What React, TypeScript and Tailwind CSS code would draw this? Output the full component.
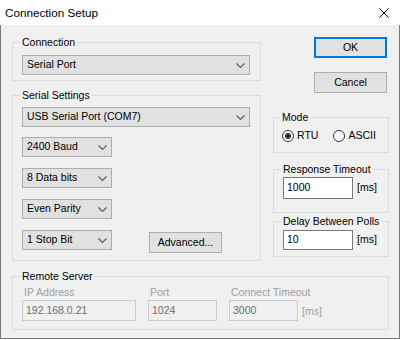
import type { ReactNode } from 'react';

function Chevron() {
  return (
    <svg width="9" height="5" viewBox="0 0 9 5" className="shrink-0">
      <path d="M0.5 0.5L4.5 4.5L8.5 0.5" fill="none" stroke="#5a5a5a" strokeWidth="1.1" />
    </svg>
  );
}

function Combo({ label, w }: { label: string; w: string }) {
  return (
    <div className={`${w} h-[20px] flex items-center justify-between pl-[4px] pr-[4px] bg-[#e1e1e1] border border-[#adadad]`}>
      <span>{label}</span>
      <Chevron />
    </div>
  );
}

function Group({ title, className, children }: { title: string; className: string; children: ReactNode }) {
  return (
    <fieldset className={`border border-[#dcdcdc] ${className}`}>
      <legend className="px-[2px] -ml-[2px] leading-[12px]">{title}</legend>
      {children}
    </fieldset>
  );
}

function Radio({ checked, label }: { checked?: boolean; label: string }) {
  return (
    <div className="flex items-center">
      <div className="w-[12px] h-[12px] rounded-full border border-[#333333] bg-white flex items-center justify-center">
        {checked && <div className="w-[6px] h-[6px] rounded-full bg-[#333333]" />}
      </div>
      <span className="ml-[3px]">{label}</span>
    </div>
  );
}

export default function App() {
  return (
    <div className="w-[400px] h-[340px] bg-white text-[10.5px] text-black font-['Liberation_Sans',Arial,sans-serif]">
      {/* Title bar */}
      <div className="h-[25px] flex items-center justify-between pl-[5px] pr-[11px]">
        <span className="text-[11.7px]">Connection Setup</span>
        <svg width="10" height="10" viewBox="0 0 10 10">
          <path d="M0.5 0.5L9.5 9.5M9.5 0.5L0.5 9.5" stroke="#000" strokeWidth="1" />
        </svg>
      </div>

      {/* Body */}
      <div className="h-[314px] bg-[#f0f0f0] border-x border-b border-[#7a7a7a] pt-[11px] pl-[11px] pr-[10px]">
        <div className="flex gap-[12px]">
          {/* Left column */}
          <div className="w-[249px] flex flex-col gap-[8px]">
            <Group title="Connection" className="pt-[7px] pb-[5px] pl-[9px] pr-[10px]">
              <Combo label="Serial Port" w="w-full" />
            </Group>
            <Group title="Serial Settings" className="pt-[6px] pb-[7px] pl-[9px] pr-[10px]">
              <div className="flex flex-col">
                <Combo label="USB Serial Port (COM7)" w="w-full" />
                <div className="mt-[10px]">
                  <Combo label="2400 Baud" w="w-[90px]" />
                </div>
                <div className="mt-[11px]">
                  <Combo label="8 Data bits" w="w-[90px]" />
                </div>
                <div className="mt-[11px]">
                  <Combo label="Even Parity" w="w-[90px]" />
                </div>
                <div className="mt-[11px] flex items-start">
                  <Combo label="1 Stop Bit" w="w-[90px]" />
                  <button className="ml-[37px] mt-[2px] w-[73px] h-[21px] bg-[#e1e1e1] border border-[#adadad]">
                    Advanced...
                  </button>
                </div>
              </div>
            </Group>
          </div>

          {/* Right column */}
          <div className="w-[116px] flex flex-col">
            <button className="self-end mr-[2px] mt-[1px] w-[73px] h-[21px] bg-[#e1e1e1] border-2 border-[#0078d7]">
              OK
            </button>
            <button className="self-end mr-[2px] mt-[14px] w-[73px] h-[21px] bg-[#e1e1e1] border border-[#adadad]">
              Cancel
            </button>
            <Group title="Mode" className="mt-[18px] pt-[6px] pb-[9px] pl-[8px]">
              <div className="h-[14px] flex items-center">
                <Radio checked label="RTU" />
                <div className="ml-[15px]">
                  <Radio label="ASCII" />
                </div>
              </div>
            </Group>
            <Group title="Response Timeout" className="mt-[10px] pt-[2px] pb-[13px] pl-[9px]">
              <div className="flex items-end">
                <div className="w-[70px] h-[22px] bg-white border border-[#7a7a7a] pl-[3px] flex items-center">1000</div>
                <span className="ml-[4px] mb-[3px]">[ms]</span>
              </div>
            </Group>
            <Group title="Delay Between Polls" className="mt-[2px] pt-[3px] pb-[6px] pl-[9px]">
              <div className="flex items-end">
                <div className="w-[70px] h-[20px] bg-white border border-[#7a7a7a] pl-[3px] flex items-center">10</div>
                <span className="ml-[4px] mb-[2px]">[ms]</span>
              </div>
            </Group>
          </div>
        </div>

        {/* Remote server */}
        <Group title="Remote Server" className="mt-[9px] pt-[4px] pb-[8px] pl-[9px]">
          <div className="flex gap-[12px]">
            <div className="flex flex-col gap-[2px]">
              <span className="leading-[12px] pl-[2px] text-[#a0a0a0]">IP Address</span>
              <div className="w-[114px] h-[21px] bg-[#f0f0f0] border border-[#cccccc] pl-[3px] flex items-center text-[#6d6d6d]">192.168.0.21</div>
            </div>
            <div className="flex flex-col gap-[2px]">
              <span className="leading-[12px] pl-[2px] text-[#a0a0a0]">Port</span>
              <div className="w-[69px] h-[21px] bg-[#f0f0f0] border border-[#cccccc] pl-[3px] flex items-center text-[#6d6d6d]">1024</div>
            </div>
            <div className="flex flex-col gap-[2px]">
              <span className="leading-[12px] pl-[2px] text-[#a0a0a0]">Connect Timeout</span>
              <div className="flex items-end">
                <div className="w-[69px] h-[21px] bg-[#f0f0f0] border border-[#cccccc] pl-[3px] flex items-center text-[#6d6d6d]">3000</div>
                <span className="ml-[4px] mb-[1px] text-[#a0a0a0]">[ms]</span>
              </div>
            </div>
          </div>
        </Group>
      </div>
    </div>
  );
}
